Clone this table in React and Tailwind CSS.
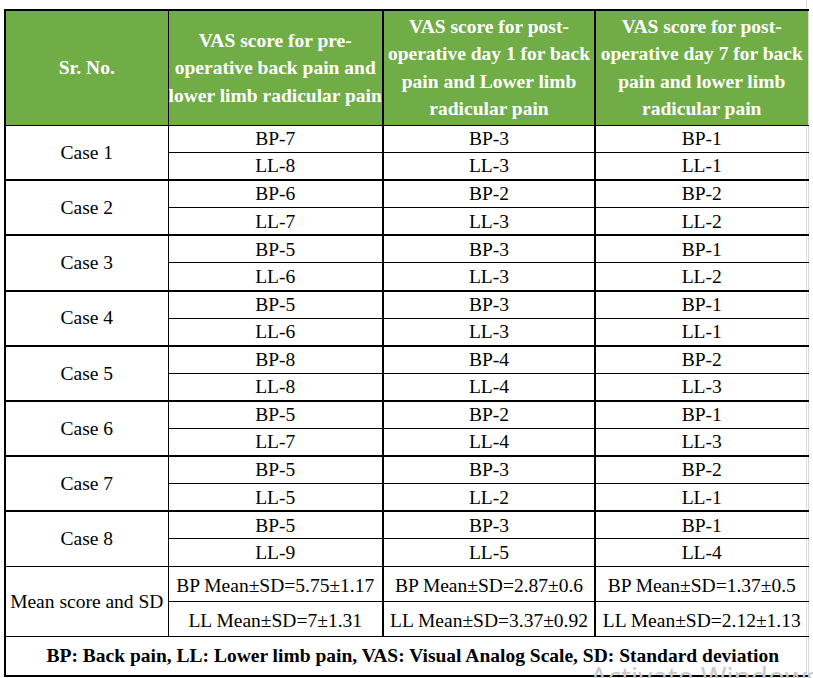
import React from 'react';

const cases = [
  ['Case 1', ['BP-7', 'LL-8'], ['BP-3', 'LL-3'], ['BP-1', 'LL-1']],
  ['Case 2', ['BP-6', 'LL-7'], ['BP-2', 'LL-3'], ['BP-2', 'LL-2']],
  ['Case 3', ['BP-5', 'LL-6'], ['BP-3', 'LL-3'], ['BP-1', 'LL-2']],
  ['Case 4', ['BP-5', 'LL-6'], ['BP-3', 'LL-3'], ['BP-1', 'LL-1']],
  ['Case 5', ['BP-8', 'LL-8'], ['BP-4', 'LL-4'], ['BP-2', 'LL-3']],
  ['Case 6', ['BP-5', 'LL-7'], ['BP-2', 'LL-4'], ['BP-1', 'LL-3']],
  ['Case 7', ['BP-5', 'LL-5'], ['BP-3', 'LL-2'], ['BP-2', 'LL-1']],
  ['Case 8', ['BP-5', 'LL-9'], ['BP-3', 'LL-5'], ['BP-1', 'LL-4']],
];

const means = [
  ['BP Mean±SD=5.75±1.17', 'LL Mean±SD=7±1.31'],
  ['BP Mean±SD=2.87±0.6', 'LL Mean±SD=3.37±0.92'],
  ['BP Mean±SD=1.37±0.5', 'LL Mean±SD=2.12±1.13'],
];

const headers = [
  ['Sr. No.'],
  ['VAS score for pre-', 'operative back pain and', 'lower limb radicular pain'],
  ['VAS score for post-', 'operative day 1 for back', 'pain and Lower limb', 'radicular pain'],
  ['VAS score for post-', 'operative day 7 for back', 'pain and lower limb', 'radicular pain'],
];

// column dividers: thin after col 1, thick after col 2 and 3
const divider = ['border-r border-r-black', 'border-r-2 border-r-black', 'border-r-2 border-r-black', 'border-r border-r-[#d9d9d9]'];

export default function App() {
  return (
    <div className="relative w-[813px] h-[678px] overflow-hidden bg-white text-black" style={{ fontFamily: '"Liberation Serif", "Times New Roman", serif' }}>
      <div className="w-[807px] h-full border-r border-[#dcdcdc] pt-[9px] pl-[4px]">
        <table className="w-[803px] table-fixed border-collapse border-l-2 border-l-black text-[19.5px] leading-none">
          <colgroup>
            <col className="w-[163px]" />
            <col className="w-[215px]" />
            <col className="w-[212px]" />
            <col className="w-[213px]" />
          </colgroup>
          <thead>
            <tr className="bg-[#70ad47] text-white font-bold">
              {headers.map((lines, i) => (
                <th key={i} className={`h-[115px] p-0 text-center align-middle border-t-2 border-t-black border-b border-b-black leading-[27.5px] whitespace-nowrap ${divider[i]}`}>
                  {lines.map((l, j) => (
                    <div key={j}>{l}</div>
                  ))}
                </th>
              ))}
            </tr>
          </thead>
          <tbody>
            {cases.map(([name, ...cols], ci) => {
              const last = ci === cases.length - 1;
              const bottom = last ? 'border-b border-b-black' : 'border-b-2 border-b-black';
              return (
                <React.Fragment key={name}>
                  <tr>
                    <td rowSpan={2} className={`p-0 text-center align-middle ${divider[0]} ${bottom}`}>{name}</td>
                    {cols.map((c, i) => (
                      <td key={i} className={`h-[27.6px] p-0 text-center align-middle border-b border-b-black ${divider[i + 1]}`}>{c[0]}</td>
                    ))}
                  </tr>
                  <tr>
                    {cols.map((c, i) => (
                      <td key={i} className={`h-[27.6px] p-0 text-center align-middle ${bottom} ${divider[i + 1]}`}>{c[1]}</td>
                    ))}
                  </tr>
                </React.Fragment>
              );
            })}
            <tr>
              <td rowSpan={2} className={`p-0 text-center align-middle whitespace-nowrap border-b border-b-black ${divider[0]}`}>Mean score and SD</td>
              {means.map((m, i) => (
                <td key={i} className={`h-[35px] pt-[3px] text-center align-middle whitespace-nowrap border-b border-b-black ${divider[i + 1]}`}>{m[0]}</td>
              ))}
            </tr>
            <tr>
              {means.map((m, i) => (
                <td key={i} className={`h-[35px] pt-[3px] text-center align-middle whitespace-nowrap border-b border-b-black ${divider[i + 1]}`}>{m[1]}</td>
              ))}
            </tr>
            <tr>
              <td colSpan={4} className="h-[39px] p-0 pl-[12px] text-center align-middle font-bold whitespace-nowrap border-b-2 border-b-black border-r border-r-[#d9d9d9]">
                BP: Back pain, LL: Lower limb pain, VAS: Visual Analog Scale, SD: Standard deviation
              </td>
            </tr>
          </tbody>
        </table>
      </div>
      <div className="absolute left-[590px] top-[662px] text-[28px] leading-none text-[#c9c9c9] whitespace-nowrap" style={{ fontFamily: '"Open Sans", sans-serif' }}>
        Activate Windows
      </div>
    </div>
  );
}
